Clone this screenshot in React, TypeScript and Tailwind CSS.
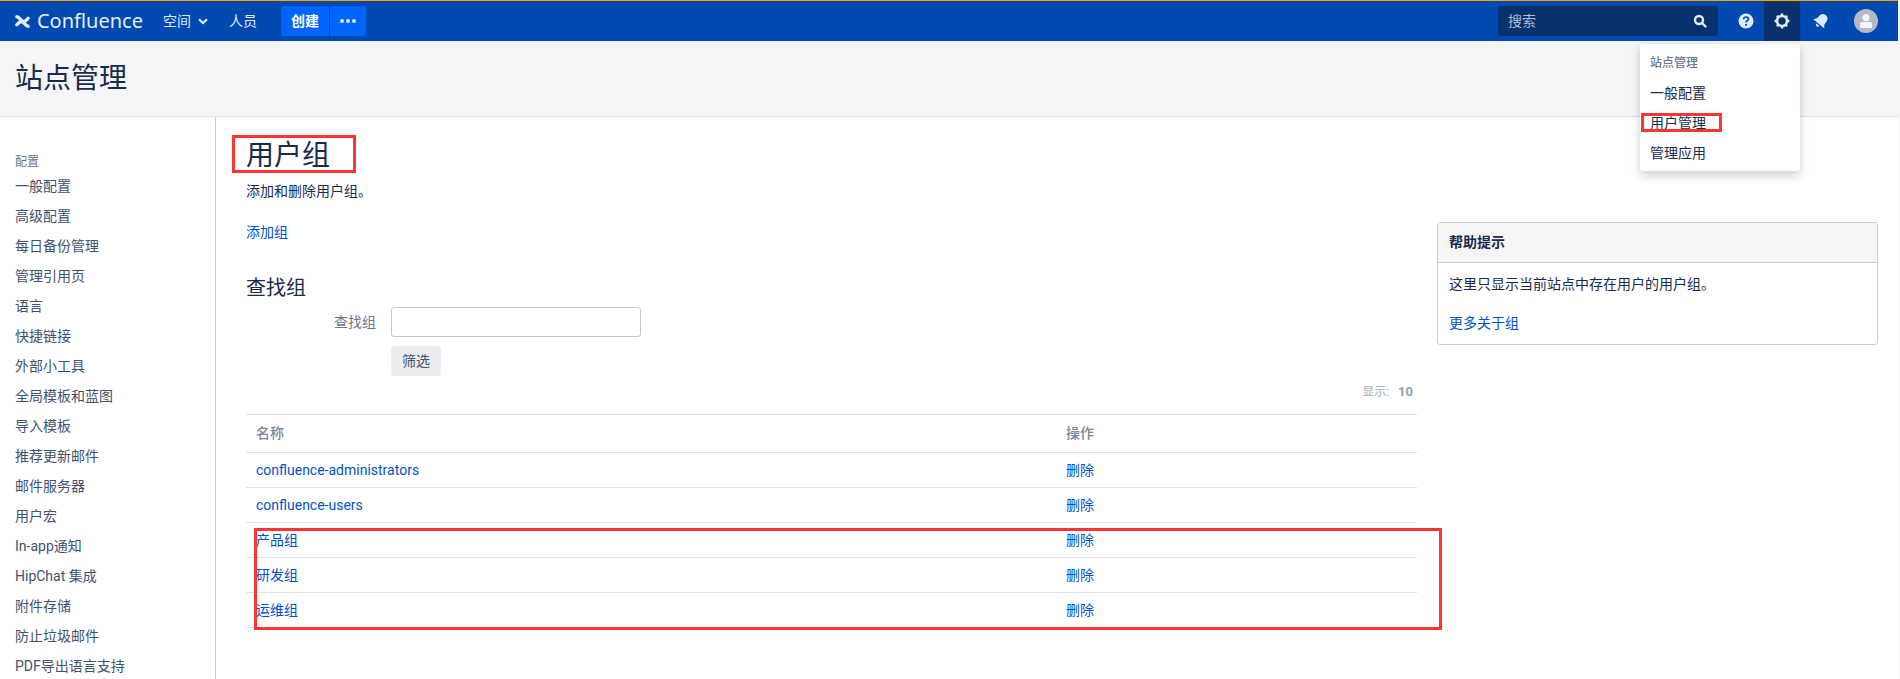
import React from 'react';

const font = { fontFamily: 'Roboto, "Noto Sans CJK SC", sans-serif' };

const navItems = [
  '一般配置',
  '高级配置',
  '每日备份管理',
  '管理引用页',
  '语言',
  '快捷链接',
  '外部小工具',
  '全局模板和蓝图',
  '导入模板',
  '推荐更新邮件',
  '邮件服务器',
  '用户宏',
  'In-app通知',
  'HipChat 集成',
  '附件存储',
  '防止垃圾邮件',
  'PDF导出语言支持',
];

const groups = ['confluence-administrators', 'confluence-users', '产品组', '研发组', '运维组'];

function Logo() {
  return (
    <svg width="16" height="15" viewBox="0 0 16 15" fill="none" stroke="#deebff" strokeWidth="3.6" strokeLinecap="round">
      <path d="M2 2.4 C5 2.4 6 7.5 9 7.5 C11 7.5 12.4 6 14 4" />
      <path d="M14 12.6 C11 12.6 10 7.5 7 7.5 C5 7.5 3.6 9 2 11" />
    </svg>
  );
}

function SearchIcon() {
  return (
    <svg width="14" height="14" viewBox="0 0 14 14" fill="none" stroke="#deebff" strokeWidth="2.4" strokeLinecap="round">
      <circle cx="6" cy="6" r="4" />
      <path d="M9.5 9.5 L12.5 12.5" />
    </svg>
  );
}

function HelpIcon() {
  return (
    <svg width="16" height="16" viewBox="0 0 16 16">
      <circle cx="8" cy="8" r="7.5" fill="#deebff" />
      <path d="M5.6 6.2 C5.7 3.2 10.4 3.4 10.4 6 C10.4 7.8 8 7.6 8 9.4" fill="none" stroke="#0049b0" strokeWidth="1.7" />
      <circle cx="8" cy="11.8" r="1.1" fill="#0049b0" />
    </svg>
  );
}

function GearIcon() {
  return (
    <svg width="16" height="16" viewBox="0 0 16 16" fill="none">
      <circle cx="8" cy="8" r="5" stroke="#deebff" strokeWidth="2.6" />
      <path
        d="M8 0.6 V3 M8 13 V15.4 M0.6 8 H3 M13 8 H15.4 M2.8 2.8 L4.4 4.4 M11.6 11.6 L13.2 13.2 M13.2 2.8 L11.6 4.4 M4.4 11.6 L2.8 13.2"
        stroke="#deebff"
        strokeWidth="2.4"
      />
    </svg>
  );
}

function BellIcon() {
  return (
    <svg width="16" height="16" viewBox="0 0 16 16" fill="#deebff">
      <g transform="rotate(40 8 8)">
        <path d="M8 0.5 C11.8 0.5 12.6 3.6 12.6 6.6 C12.6 8.8 13.6 10 15.4 11.6 H0.6 C2.4 10 3.4 8.8 3.4 6.6 C3.4 3.6 4.2 0.5 8 0.5 Z" />
        <path d="M6 12.8 H10 A2 2 0 0 1 6 12.8 Z" />
      </g>
    </svg>
  );
}

function Avatar() {
  return (
    <svg width="24" height="24" viewBox="0 0 24 24">
      <circle cx="12" cy="12" r="12" fill="#b3bac5" />
      <circle cx="12" cy="8.6" r="3.6" fill="#f4f5f7" />
      <path d="M6 14.5 Q6 13 8 13 H16 Q18 13 18 14.5 V19 H6 Z" fill="#f4f5f7" />
    </svg>
  );
}

function TopBar() {
  return (
    <header className="flex h-[41px] items-center border-t border-[#f5a400] bg-[#0049b0] text-[#deebff]">
      <div className="ml-[15px] flex w-[128px] items-center gap-[7px]">
        <Logo />
        <span className="font-['Noto_Sans'] text-[20px] leading-none text-[#e6efff]">Confluence</span>
      </div>
      <span className="ml-[20px] text-[14px]">空间</span>
      <svg className="ml-[7px]" width="10" height="7" viewBox="0 0 10 7" fill="none" stroke="#deebff" strokeWidth="2.2">
        <path d="M1 1.2 L5 5 L9 1.2" />
      </svg>
      <span className="ml-[21px] text-[14px]">人员</span>
      <div className="ml-[24px] flex h-[30px] font-bold text-white">
        <span className="flex w-[48px] items-center justify-center rounded-l-[3px] bg-[#0065ff] text-[14px]">创建</span>
        <span className="ml-px flex w-[36px] items-center justify-center gap-[2px] rounded-r-[3px] bg-[#0065ff]">
          <i className="h-[4px] w-[4px] rounded-full bg-[#deebff]" />
          <i className="h-[4px] w-[4px] rounded-full bg-[#deebff]" />
          <i className="h-[4px] w-[4px] rounded-full bg-[#deebff]" />
        </span>
      </div>
      <div className="ml-auto flex h-[30px] w-[220px] items-center justify-between rounded-[3px] bg-[#09326c] pl-[10px] pr-[11px] text-[14px] text-[#a9bcd8]">
        <span>搜索</span>
        <SearchIcon />
      </div>
      <div className="ml-[10px] flex h-full w-[36px] items-center justify-center">
        <HelpIcon />
      </div>
      <div className="flex h-full w-[36px] items-center justify-center bg-[#09326c]">
        <GearIcon />
      </div>
      <div className="ml-[3px] flex h-full w-[36px] items-center justify-center">
        <BellIcon />
      </div>
      <div className="ml-[15px] mr-[20px] flex items-center">
        <Avatar />
      </div>
    </header>
  );
}

function AdminMenu() {
  return (
    <div className="absolute left-[1640px] top-[44px] h-[127px] w-[160px] rounded-[3px] bg-white pl-[10px] text-[#172b4d] shadow-[0_4px_10px_rgba(9,30,66,0.22)]">
      <div className="mt-[10px] text-[12px] font-medium leading-[18px] text-[#6b778c]">站点管理</div>
      <div className="mt-[6px] text-[14px] leading-[30px]">一般配置</div>
      <div className="text-[14px] leading-[30px]">用户管理</div>
      <div className="text-[14px] leading-[30px]">管理应用</div>
      <div className="absolute left-[1px] top-[69px] h-[19px] w-[81px] border-[3px] border-[#ff3333]" />
    </div>
  );
}

function Sidebar() {
  return (
    <nav className="h-[562px] w-[216px] shrink-0 overflow-hidden border-r border-[#cccccc] pl-[15px] pt-[36px] text-[14px] text-[#42526e]">
      <div className="text-[12px] leading-[18px] text-[#6b778c]">配置</div>
      <ul>
        {navItems.map(item => (
          <li key={item} className="h-[30px] leading-[30px]">
            {item}
          </li>
        ))}
      </ul>
    </nav>
  );
}

function GroupsTable() {
  return (
    <div className="relative w-[1171px] text-[14px]">
      <div className="flex h-[39px] items-center border-y border-[#dfe1e6] pl-[10px] font-medium text-[#7a869a]">
        <span className="w-[810px]">名称</span>
        <span>操作</span>
      </div>
      {groups.map(group => (
        <div key={group} className="flex h-[35px] items-center border-b border-[#dfe1e6] pl-[10px] text-[#0052cc]">
          <span className="w-[810px]">{group}</span>
          <span>删除</span>
        </div>
      ))}
      <div className="absolute left-[8px] top-[114px] h-[102px] w-[1188px] border-[3px] border-[#ff3333]" />
    </div>
  );
}

function HelpPanel() {
  return (
    <aside className="mt-[105px] h-[123px] w-[441px] shrink-0 rounded-[3px] border border-[#cccccc] text-[14px] text-[#172b4d]">
      <div className="flex h-[40px] items-center border-b border-[#cccccc] bg-[#f5f5f5] pl-[11px] font-bold">帮助提示</div>
      <div className="pl-[11px]">
        <p className="mt-[11px] leading-[20px]">这里只显示当前站点中存在用户的用户组。</p>
        <a className="mt-[19px] block leading-[20px] text-[#0052cc]">更多关于组</a>
      </div>
    </aside>
  );
}

export default function App() {
  return (
    <div className="relative flex h-[679px] w-[1900px] overflow-hidden bg-[#f7f7f7]" style={font}>
      <div className="h-full w-[1898px] bg-white">
        <TopBar />
        <div className="flex h-[76px] items-center border-b border-[#dfe1e6] bg-[#f4f5f7] pl-[15px]">
          <h1 className="text-[28px] font-normal text-[#172b4d]">站点管理</h1>
        </div>
        <div className="flex">
          <Sidebar />
          <main className="flex flex-1 pl-[30px] text-[#172b4d]">
            <div className="w-[1191px] shrink-0 pt-[18px]">
              <div className="relative w-fit">
                <h2 className="text-[28px] font-normal leading-[42px]">用户组</h2>
                <div className="absolute left-[-14px] top-0 h-[38px] w-[124px] border-[3px] border-[#ff3333]" />
              </div>
              <p className="mt-[4px] text-[14px] leading-[20px]">添加和删除用户组。</p>
              <a className="mt-[21px] block text-[14px] leading-[20px] text-[#0052cc]">添加组</a>
              <h3 className="mt-[31px] text-[20px] font-normal leading-[30px]">查找组</h3>
              <div className="mt-[4px] flex items-center">
                <label className="w-[130px] text-right text-[14px] text-[#6b778c]">查找组</label>
                <input className="ml-[15px] h-[30px] w-[250px] rounded-[3px] border border-[#c1c7d0] bg-white" />
              </div>
              <button className="ml-[145px] mt-[9px] block h-[30px] w-[50px] rounded-[3px] bg-[#ebecf0] text-[14px] text-[#42526e]">
                筛选
              </button>
              <div className="mr-[24px] mt-[6px] flex h-[20px] items-center justify-end gap-[9px] text-[12px] text-[#a5adba]">
                <span>显示:</span>
                <b className="text-[13px] text-[#97a0af]">10</b>
              </div>
              <div className="mt-[12px]">
                <GroupsTable />
              </div>
            </div>
            <HelpPanel />
          </main>
        </div>
      </div>
      <AdminMenu />
    </div>
  );
}
